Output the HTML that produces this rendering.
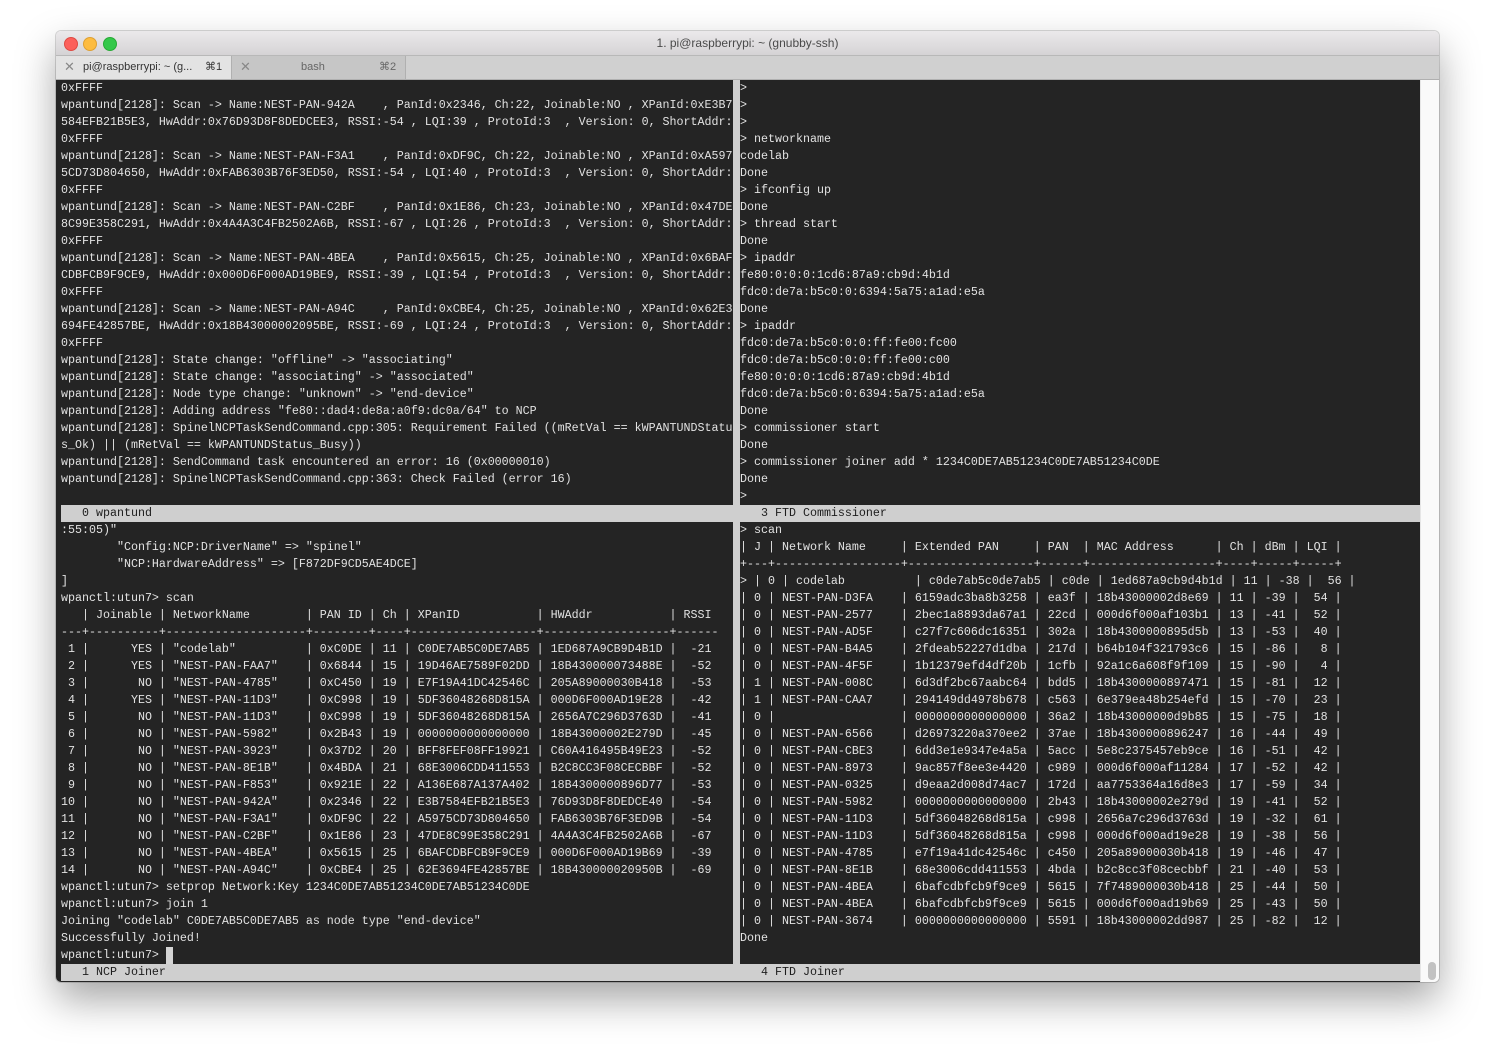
<!DOCTYPE html>
<html><head><meta charset="utf-8"><style>
html,body{margin:0;padding:0;background:#fff;width:1495px;height:1063px;overflow:hidden;}
.win{position:absolute;left:56px;top:31px;width:1383px;height:951px;border-radius:5px;overflow:hidden;background:#fff;box-shadow:0 18px 40px rgba(0,0,0,0.35),0 0 0 1px rgba(0,0,0,0.15);}
.title{position:absolute;left:0;top:0;width:1383px;height:24px;background:linear-gradient(#ebe9eb,#d5d3d5);font:12px "Liberation Sans",sans-serif;color:#4a4a4a;text-align:center;line-height:24px;}
.dot{position:absolute;top:6px;width:12px;height:12px;border-radius:50%;}
.tabs{position:absolute;left:0;top:24px;width:1383px;height:25px;background:#d0d0d0;border-top:1px solid #b8b8b8;border-bottom:1px solid #b0b0b0;box-sizing:border-box;font:11px "Liberation Sans",sans-serif;color:#333;}
.tab{position:absolute;top:0;height:23px;line-height:22px;border-right:1px solid #b0b0b0;box-sizing:border-box;}
.term{position:absolute;left:0;top:49px;width:1364px;height:902px;background:#242424;}
pre{margin:0;position:absolute;font-family:"Liberation Mono",monospace;font-size:11.67px;line-height:17px;color:#e2e2e2;overflow:hidden;white-space:pre;}
.bar{position:absolute;height:17px;background:#cfcfcf;}
.bar pre{color:#1c1c1c;}
</style></head><body>
<div class="win">
<div class="title">1. pi@raspberrypi: ~ (gnubby-ssh)
<div class="dot" style="left:8px;background:#fc605b;border:0.5px solid #de4a43;"></div>
<div class="dot" style="left:27px;background:#fdbc40;border:0.5px solid #dea032;"></div>
<div class="dot" style="left:47px;background:#34c84a;border:0.5px solid #27aa35;"></div>
</div>
<div class="tabs">
<div class="tab" style="left:0;width:176px;background:#e3e3e3;"><span style="position:absolute;left:8px;color:#888;font-size:13px;">✕</span><span style="position:absolute;left:27px;">pi@raspberrypi: ~ (g...</span><span style="position:absolute;left:149px;">⌘1</span></div>
<div class="tab" style="left:176px;width:174px;background:#c6c6c6;color:#666;"><span style="position:absolute;left:8px;color:#888;font-size:13px;">✕</span><span style="position:absolute;left:69px;">bash</span><span style="position:absolute;left:147px;">⌘2</span></div>
</div>
<div class="term">
<div style="position:absolute;left:677px;top:0;width:7px;height:425px;background:#cfcfcf;"></div>
<div style="position:absolute;left:677px;top:442px;width:7px;height:442px;background:#cfcfcf;"></div>
<div class="bar" style="left:5px;top:425px;width:1359px;"><pre style="left:0;top:0;">   0 wpantund</pre><pre style="left:679px;top:0;">   3 FTD Commissioner</pre></div>
<div class="bar" style="left:5px;top:884px;width:1359px;"><pre style="left:0;top:0;">   1 NCP Joiner</pre><pre style="left:679px;top:0;">   4 FTD Joiner</pre></div>
<pre style="left:5px;top:0;width:672px;height:425px;">0xFFFF
wpantund[2128]: Scan -> Name:NEST-PAN-942A    , PanId:0x2346, Ch:22, Joinable:NO , XPanId:0xE3B7
584EFB21B5E3, HwAddr:0x76D93D8F8DEDCEE3, RSSI:-54 , LQI:39 , ProtoId:3  , Version: 0, ShortAddr:
0xFFFF
wpantund[2128]: Scan -> Name:NEST-PAN-F3A1    , PanId:0xDF9C, Ch:22, Joinable:NO , XPanId:0xA597
5CD73D804650, HwAddr:0xFAB6303B76F3ED50, RSSI:-54 , LQI:40 , ProtoId:3  , Version: 0, ShortAddr:
0xFFFF
wpantund[2128]: Scan -> Name:NEST-PAN-C2BF    , PanId:0x1E86, Ch:23, Joinable:NO , XPanId:0x47DE
8C99E358C291, HwAddr:0x4A4A3C4FB2502A6B, RSSI:-67 , LQI:26 , ProtoId:3  , Version: 0, ShortAddr:
0xFFFF
wpantund[2128]: Scan -> Name:NEST-PAN-4BEA    , PanId:0x5615, Ch:25, Joinable:NO , XPanId:0x6BAF
CDBFCB9F9CE9, HwAddr:0x000D6F000AD19BE9, RSSI:-39 , LQI:54 , ProtoId:3  , Version: 0, ShortAddr:
0xFFFF
wpantund[2128]: Scan -> Name:NEST-PAN-A94C    , PanId:0xCBE4, Ch:25, Joinable:NO , XPanId:0x62E3
694FE42857BE, HwAddr:0x18B43000002095BE, RSSI:-69 , LQI:24 , ProtoId:3  , Version: 0, ShortAddr:
0xFFFF
wpantund[2128]: State change: "offline" -> "associating"
wpantund[2128]: State change: "associating" -> "associated"
wpantund[2128]: Node type change: "unknown" -> "end-device"
wpantund[2128]: Adding address "fe80::dad4:de8a:a0f9:dc0a/64" to NCP
wpantund[2128]: SpinelNCPTaskSendCommand.cpp:305: Requirement Failed ((mRetVal == kWPANTUNDStatu
s_Ok) || (mRetVal == kWPANTUNDStatus_Busy))
wpantund[2128]: SendCommand task encountered an error: 16 (0x00000010)
wpantund[2128]: SpinelNCPTaskSendCommand.cpp:363: Check Failed (error 16)
</pre>
<pre style="left:684px;top:0;width:680px;height:425px;">>
>
>
> networkname
codelab
Done
> ifconfig up
Done
> thread start
Done
> ipaddr
fe80:0:0:0:1cd6:87a9:cb9d:4b1d
fdc0:de7a:b5c0:0:6394:5a75:a1ad:e5a
Done
> ipaddr
fdc0:de7a:b5c0:0:0:ff:fe00:fc00
fdc0:de7a:b5c0:0:0:ff:fe00:c00
fe80:0:0:0:1cd6:87a9:cb9d:4b1d
fdc0:de7a:b5c0:0:6394:5a75:a1ad:e5a
Done
> commissioner start
Done
> commissioner joiner add * 1234C0DE7AB51234C0DE7AB51234C0DE
Done
>
</pre>
<pre style="left:5px;top:442px;width:672px;height:442px;">:55:05)"
        "Config:NCP:DriverName" => "spinel"
        "NCP:HardwareAddress" => [F872DF9CD5AE4DCE]
]
wpanctl:utun7> scan
   | Joinable | NetworkName        | PAN ID | Ch | XPanID           | HWAddr           | RSSI
---+----------+--------------------+--------+----+------------------+------------------+------
 1 |      YES | "codelab"          | 0xC0DE | 11 | C0DE7AB5C0DE7AB5 | 1ED687A9CB9D4B1D |  -21
 2 |      YES | "NEST-PAN-FAA7"    | 0x6844 | 15 | 19D46AE7589F02DD | 18B430000073488E |  -52
 3 |       NO | "NEST-PAN-4785"    | 0xC450 | 19 | E7F19A41DC42546C | 205A89000030B418 |  -53
 4 |      YES | "NEST-PAN-11D3"    | 0xC998 | 19 | 5DF36048268D815A | 000D6F000AD19E28 |  -42
 5 |       NO | "NEST-PAN-11D3"    | 0xC998 | 19 | 5DF36048268D815A | 2656A7C296D3763D |  -41
 6 |       NO | "NEST-PAN-5982"    | 0x2B43 | 19 | 0000000000000000 | 18B43000002E279D |  -45
 7 |       NO | "NEST-PAN-3923"    | 0x37D2 | 20 | BFF8FEF08FF19921 | C60A416495B49E23 |  -52
 8 |       NO | "NEST-PAN-8E1B"    | 0x4BDA | 21 | 68E3006CDD411553 | B2C8CC3F08CECBBF |  -52
 9 |       NO | "NEST-PAN-F853"    | 0x921E | 22 | A136E687A137A402 | 18B4300000896D77 |  -53
10 |       NO | "NEST-PAN-942A"    | 0x2346 | 22 | E3B7584EFB21B5E3 | 76D93D8F8DEDCE40 |  -54
11 |       NO | "NEST-PAN-F3A1"    | 0xDF9C | 22 | A5975CD73D804650 | FAB6303B76F3ED9B |  -54
12 |       NO | "NEST-PAN-C2BF"    | 0x1E86 | 23 | 47DE8C99E358C291 | 4A4A3C4FB2502A6B |  -67
13 |       NO | "NEST-PAN-4BEA"    | 0x5615 | 25 | 6BAFCDBFCB9F9CE9 | 000D6F000AD19B69 |  -39
14 |       NO | "NEST-PAN-A94C"    | 0xCBE4 | 25 | 62E3694FE42857BE | 18B430000020950B |  -69
wpanctl:utun7> setprop Network:Key 1234C0DE7AB51234C0DE7AB51234C0DE
wpanctl:utun7> join 1
Joining "codelab" C0DE7AB5C0DE7AB5 as node type "end-device"
Successfully Joined!
wpanctl:utun7>
</pre>
<div style="position:absolute;left:110px;top:867px;width:7px;height:17px;background:#d4d4d4;"></div>
<pre style="left:684px;top:442px;width:680px;height:442px;">> scan
| J | Network Name     | Extended PAN     | PAN  | MAC Address      | Ch | dBm | LQI |
+---+------------------+------------------+------+------------------+----+-----+-----+
> | 0 | codelab          | c0de7ab5c0de7ab5 | c0de | 1ed687a9cb9d4b1d | 11 | -38 |  56 |
| 0 | NEST-PAN-D3FA    | 6159adc3ba8b3258 | ea3f | 18b43000002d8e69 | 11 | -39 |  54 |
| 0 | NEST-PAN-2577    | 2bec1a8893da67a1 | 22cd | 000d6f000af103b1 | 13 | -41 |  52 |
| 0 | NEST-PAN-AD5F    | c27f7c606dc16351 | 302a | 18b4300000895d5b | 13 | -53 |  40 |
| 0 | NEST-PAN-B4A5    | 2fdeab52227d1dba | 217d | b64b104f321793c6 | 15 | -86 |   8 |
| 0 | NEST-PAN-4F5F    | 1b12379efd4df20b | 1cfb | 92a1c6a608f9f109 | 15 | -90 |   4 |
| 1 | NEST-PAN-008C    | 6d3df2bc67aabc64 | bdd5 | 18b4300000897471 | 15 | -81 |  12 |
| 1 | NEST-PAN-CAA7    | 294149dd4978b678 | c563 | 6e379ea48b254efd | 15 | -70 |  23 |
| 0 |                  | 0000000000000000 | 36a2 | 18b43000000d9b85 | 15 | -75 |  18 |
| 0 | NEST-PAN-6566    | d26973220a370ee2 | 37ae | 18b4300000896247 | 16 | -44 |  49 |
| 0 | NEST-PAN-CBE3    | 6dd3e1e9347e4a5a | 5acc | 5e8c2375457eb9ce | 16 | -51 |  42 |
| 0 | NEST-PAN-8973    | 9ac857f8ee3e4420 | c989 | 000d6f000af11284 | 17 | -52 |  42 |
| 0 | NEST-PAN-0325    | d9eaa2d008d74ac7 | 172d | aa7753364a16d8e3 | 17 | -59 |  34 |
| 0 | NEST-PAN-5982    | 0000000000000000 | 2b43 | 18b43000002e279d | 19 | -41 |  52 |
| 0 | NEST-PAN-11D3    | 5df36048268d815a | c998 | 2656a7c296d3763d | 19 | -32 |  61 |
| 0 | NEST-PAN-11D3    | 5df36048268d815a | c998 | 000d6f000ad19e28 | 19 | -38 |  56 |
| 0 | NEST-PAN-4785    | e7f19a41dc42546c | c450 | 205a89000030b418 | 19 | -46 |  47 |
| 0 | NEST-PAN-8E1B    | 68e3006cdd411553 | 4bda | b2c8cc3f08cecbbf | 21 | -40 |  53 |
| 0 | NEST-PAN-4BEA    | 6bafcdbfcb9f9ce9 | 5615 | 7f7489000030b418 | 25 | -44 |  50 |
| 0 | NEST-PAN-4BEA    | 6bafcdbfcb9f9ce9 | 5615 | 000d6f000ad19b69 | 25 | -43 |  50 |
| 0 | NEST-PAN-3674    | 0000000000000000 | 5591 | 18b43000002dd987 | 25 | -82 |  12 |
Done
</pre>
</div>
<div style="position:absolute;left:1364px;top:49px;width:19px;height:902px;background:#fafafa;border-left:1px solid #e6e6e6;box-sizing:border-box;"></div>
<div style="position:absolute;left:1372px;top:931px;width:8px;height:18px;border-radius:4px;background:#c2c2c2;"></div>
</div>
</body></html>
